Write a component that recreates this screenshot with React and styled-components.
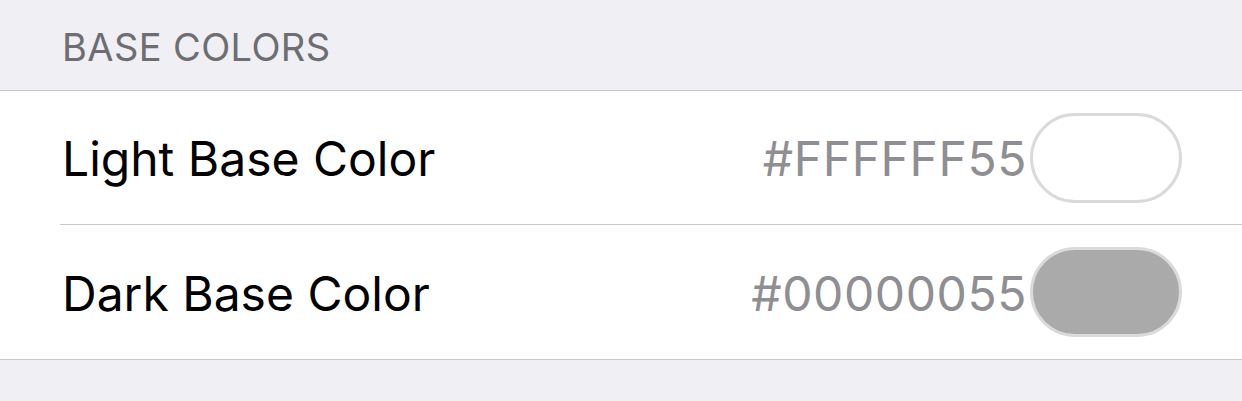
import React from "react";
import styled, { createGlobalStyle } from "styled-components";

const Global = createGlobalStyle`
  html, body { margin: 0; padding: 0; background: #efeff4; }
  body { font-family: Inter, "Liberation Sans", sans-serif; -webkit-font-smoothing: antialiased; }
`;

const Page = styled.div`
  width: 1242px;
  height: 401px;
  background: #efeff4;
  overflow: hidden;
`;

const SectionHeader = styled.div`
  height: 91px;
  box-sizing: border-box;
  padding: 28px 0 0 62px;
  font-size: 38px;
  line-height: 38px;
  color: #6d6d72;
  letter-spacing: 0.4px;
  border-bottom: 1px solid #c8c7cc;
`;

const Group = styled.div`
  background: #fff;
  border-bottom: 1px solid #c8c7cc;
`;

const Row = styled.div`
  height: ${(p) => p.$h}px;
  display: flex;
  align-items: center;
  padding: 0 60px 0 62px;
  position: relative;
  ${(p) =>
    p.$divider &&
    `
    &::after {
      content: "";
      position: absolute;
      left: 60px;
      right: 0;
      bottom: -1px;
      height: 1px;
      background: #c8c7cc;
    }
    margin-bottom: 1px;
  `}
`;

const Label = styled.div`
  flex: 1;
  font-size: 48px;
  color: #000;
  letter-spacing: 0;
  padding-top: 2px;
`;

const Value = styled.div`
  font-size: 48px;
  color: #8e8e93;
  margin-right: 3px;
  letter-spacing: 0.6px;
  padding-top: 2px;
`;

const Swatch = styled.div`
  width: 152px;
  height: 90px;
  box-sizing: border-box;
  border-radius: 45px;
  border: 3px solid #dadada;
  background: ${(p) => p.$color};
`;

export default function App() {
  return (
    <>
      <Global />
      <Page>
        <SectionHeader>BASE COLORS</SectionHeader>
        <Group>
          <Row $divider $h={133}>
            <Label>Light Base Color</Label>
            <Value>#FFFFFF55</Value>
            <Swatch $color="#ffffff" />
          </Row>
          <Row $h={134}>
            <Label>Dark Base Color</Label>
            <Value>#00000055</Value>
            <Swatch $color="#aaaaaa" />
          </Row>
        </Group>
      </Page>
    </>
  );
}
